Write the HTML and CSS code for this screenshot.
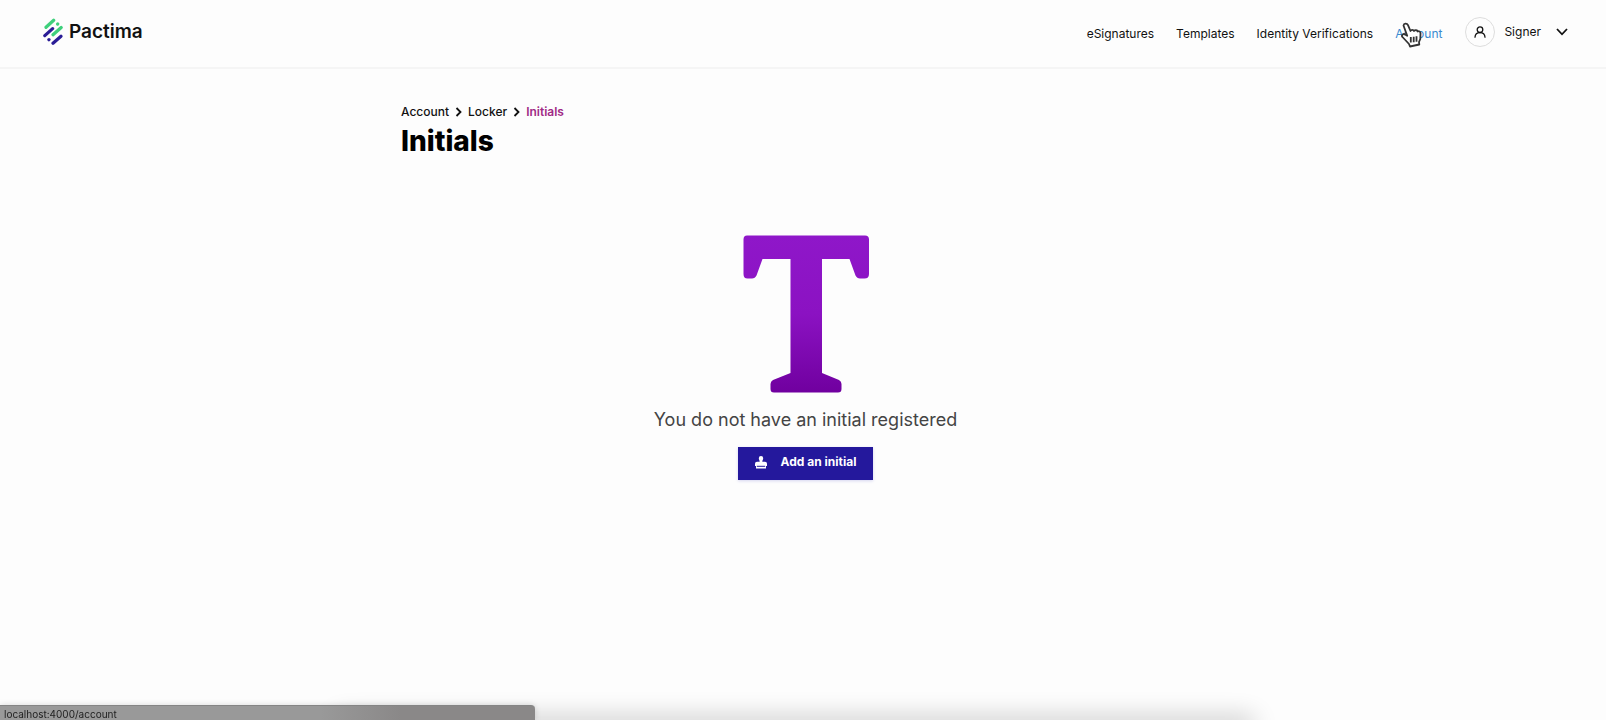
FILE: index.html
```
<!DOCTYPE html>
<html lang="en">
<head>
    <meta charset="UTF-8">
    <meta name="viewport" content="width=device-width, initial-scale=1.0">
    <link rel="stylesheet" href="styles.css">
    <title>Pactima - Initials</title>
</head>
<body>
    <header class="header">
        <a class="logo" href="#">
            <svg width="20" height="28" viewBox="0 0 20 28" fill="none" stroke-width="3.200" stroke-linecap="round">
                <path d="M3 9.300L10.700 2.300M10 16.800L18.200 9.500M14.600 6.100L14.700 6" stroke="#3fd07c"/>
                <path d="M1.800 17.600L9.600 10.600M10 25.300L18 18.300M5.900 21.700L6 21.600" stroke="#2a1d96"/>
            </svg>
            <span>Pactima</span>
        </a>
        <nav class="nav">
            <a href="#">eSignatures</a>
            <a href="#">Templates</a>
            <a href="#">Identity Verifications</a>
            <a class="hovered" href="#">Account
                <svg class="cursor" width="24" height="26" viewBox="0 0 24 26" fill="#fff" stroke="#333" stroke-width="1.800" stroke-linejoin="round">
                    <path d="M2.500 3.500C2.800 1.200 6 1 7 3.200L9.500 9C10 7.500 12.500 7.500 13 9C14 7.800 16.300 8 16.800 9.500C18 8.800 19.300 9.500 19.500 11L19.300 17L18 20L18.300 22.500L9 24.500L8 22L1.500 15C0 13 2.500 11 4.500 12.800L6.200 13.800Z"/>
                    <path d="M9.800 15V20.500M12.700 14.700V20.200M15.500 14.300V19.800"/>
                </svg>
            </a>
        </nav>
        <button class="user" type="button">
            <span class="avatar">
                <svg width="12" height="12" viewBox="0 0 12 12" fill="none" stroke="#111" stroke-width="1.300" stroke-linecap="round">
                    <circle cx="6" cy="3.700" r="2.800"/>
                    <path d="M1 11.200C1.300 5.200 10.700 5.200 11 11.200"/>
                </svg>
            </span>
            <span class="name">Signer</span>
            <svg width="12" height="8" viewBox="0 0 12 8" fill="none" stroke="#111" stroke-width="1.800">
                <path d="M1 1L6 6.300L11 1"/>
            </svg>
        </button>
    </header>

    <main class="main">
        <nav class="breadcrumb">
            <a href="#">Account</a>
            <svg width="7" height="10" viewBox="0 0 7 10" fill="none" stroke="#111" stroke-width="1.800"><path d="M1.500 1L5.500 5L1.500 9"/></svg>
            <a href="#">Locker</a>
            <svg width="7" height="10" viewBox="0 0 7 10" fill="none" stroke="#111" stroke-width="1.800"><path d="M1.500 1L5.500 5L1.500 9"/></svg>
            <a class="current" href="#">Initials</a>
        </nav>
        <h1>Initials</h1>

        <section class="empty">
            <svg width="126" height="158" viewBox="0 0 126 158">
                <defs>
                    <linearGradient id="purple" x1="0" y1="0" x2="0" y2="1">
                        <stop offset="0" stop-color="#8f17c9"/>
                        <stop offset="0.5" stop-color="#8b12c2"/>
                        <stop offset="1" stop-color="#70009f"/>
                    </linearGradient>
                </defs>
                <path fill="url(#purple)" d="M4 0.500H122Q126 0.500 126 4.500V39Q126 43.500 121.500 43.500H117Q114 43.500 112.500 40.500L106.500 24H79V138L96 145Q98.500 146.500 98.500 149V154Q98.500 157.500 95 157.500H31Q27.500 157.500 27.500 154V149Q27.500 146.500 30 145L47.500 138V24H19.500L13.500 40.500Q12 43.500 9 43.500H4.500Q0.500 43.500 0.500 39V4.500Q0.500 0.500 4 0.500Z"/>
            </svg>
            <p>You do not have an initial registered</p>
            <button class="add" type="button">
                <svg width="12" height="13" viewBox="0 0 12 13" fill="#fff">
                    <path d="M3.800 2.300A2.200 2.200 0 0 1 8.200 2.300C8.200 3.800 7.300 4 7.300 5.800H10Q12 5.800 12 7.800V10H0V7.800Q0 5.800 2 5.800H4.700C4.700 4 3.800 3.800 3.800 2.300ZM1 9H11V12.500H1Z"/>
                    <path d="M1.800 10.300H10.200" stroke="#24189c" stroke-width="1"/>
                </svg>
                <span>Add an initial</span>
            </button>
        </section>
    </main>

    <div class="shade"></div>
    <div class="status">localhost:4000/account</div>
</body>
</html>
```
FILE: styles.css
```
* {
    box-sizing: border-box;
}

body {
    margin: 0;
    min-height: 100vh;
    background: #fdfdfd;
    color: #111;
    font-family: Inter, "Liberation Sans", sans-serif;
    font-size: 12px;
    line-height: 16px;
    overflow: hidden;
}

a {
    color: inherit;
    text-decoration: none;
}

button {
    border: 0;
    padding: 0;
    background: none;
    color: inherit;
    font: inherit;
    cursor: pointer;
}

svg {
    display: block;
    flex: none;
}

.header {
    display: flex;
    align-items: center;
    height: 69px;
    padding: 0 38px 3px 43px;
    border-bottom: 2px solid #f5f5f5;
}

.logo {
    display: flex;
    align-items: center;
    gap: 6px;
    font-size: 19px;
    font-weight: 600;
    line-height: 24px;
}

.nav {
    display: flex;
    gap: 22px;
    margin-left: auto;
    padding-top: 3px;
}

.hovered {
    position: relative;
    color: #3b8ad0;
}

.cursor {
    position: absolute;
    left: 6px;
    top: -4px;
}

.user {
    display: flex;
    align-items: center;
    margin-left: 23px;
}

.avatar {
    display: flex;
    align-items: center;
    justify-content: center;
    width: 30px;
    height: 30px;
    border: 1px solid #ddd;
    border-radius: 50%;
}

.name {
    margin: 0 15px 0 9px;
}

.main {
    width: 100%;
    max-width: 810px;
    margin: 0 auto;
    padding: 35px 0 0 3px;
}

.breadcrumb {
    display: flex;
    align-items: center;
    gap: 6px;
    font-weight: 500;
}

.current {
    color: #a02a86;
    font-weight: 600;
}

h1 {
    margin: 5px 0 0;
    font-size: 28px;
    font-weight: 800;
    line-height: 32px;
    color: #000;
}

.empty {
    display: flex;
    flex-direction: column;
    align-items: center;
    padding: 78px 0 0 2px;
}

.empty p {
    margin: 15px 0;
    font-size: 18px;
    line-height: 24px;
    color: #444;
}

.add {
    display: flex;
    align-items: center;
    gap: 14px;
    height: 33px;
    padding: 0 17px 3px;
    background: #24189c;
    color: #fff;
    font-weight: 700;
    box-shadow: 0 1px 3px #d5d5f0;
}

/* soft shadow along the bottom of the window */
.shade {
    position: fixed;
    left: 340px;
    right: 356px;
    bottom: -10px;
    height: 10px;
    box-shadow: 0 0 24px 4px rgba(0, 0, 0, 0.2);
}

.status {
    position: fixed;
    left: 0;
    bottom: 0;
    width: 33.33%;
    height: 15px;
    padding-left: 4px;
    border-top: 1px solid #858585;
    border-top-right-radius: 4px;
    background: linear-gradient(90deg, #999 60%, #8a8888 75%);
    box-shadow: 0 0 6px rgba(0, 0, 0, 0.15);
    color: #222;
    font-size: 10px;
}
```
